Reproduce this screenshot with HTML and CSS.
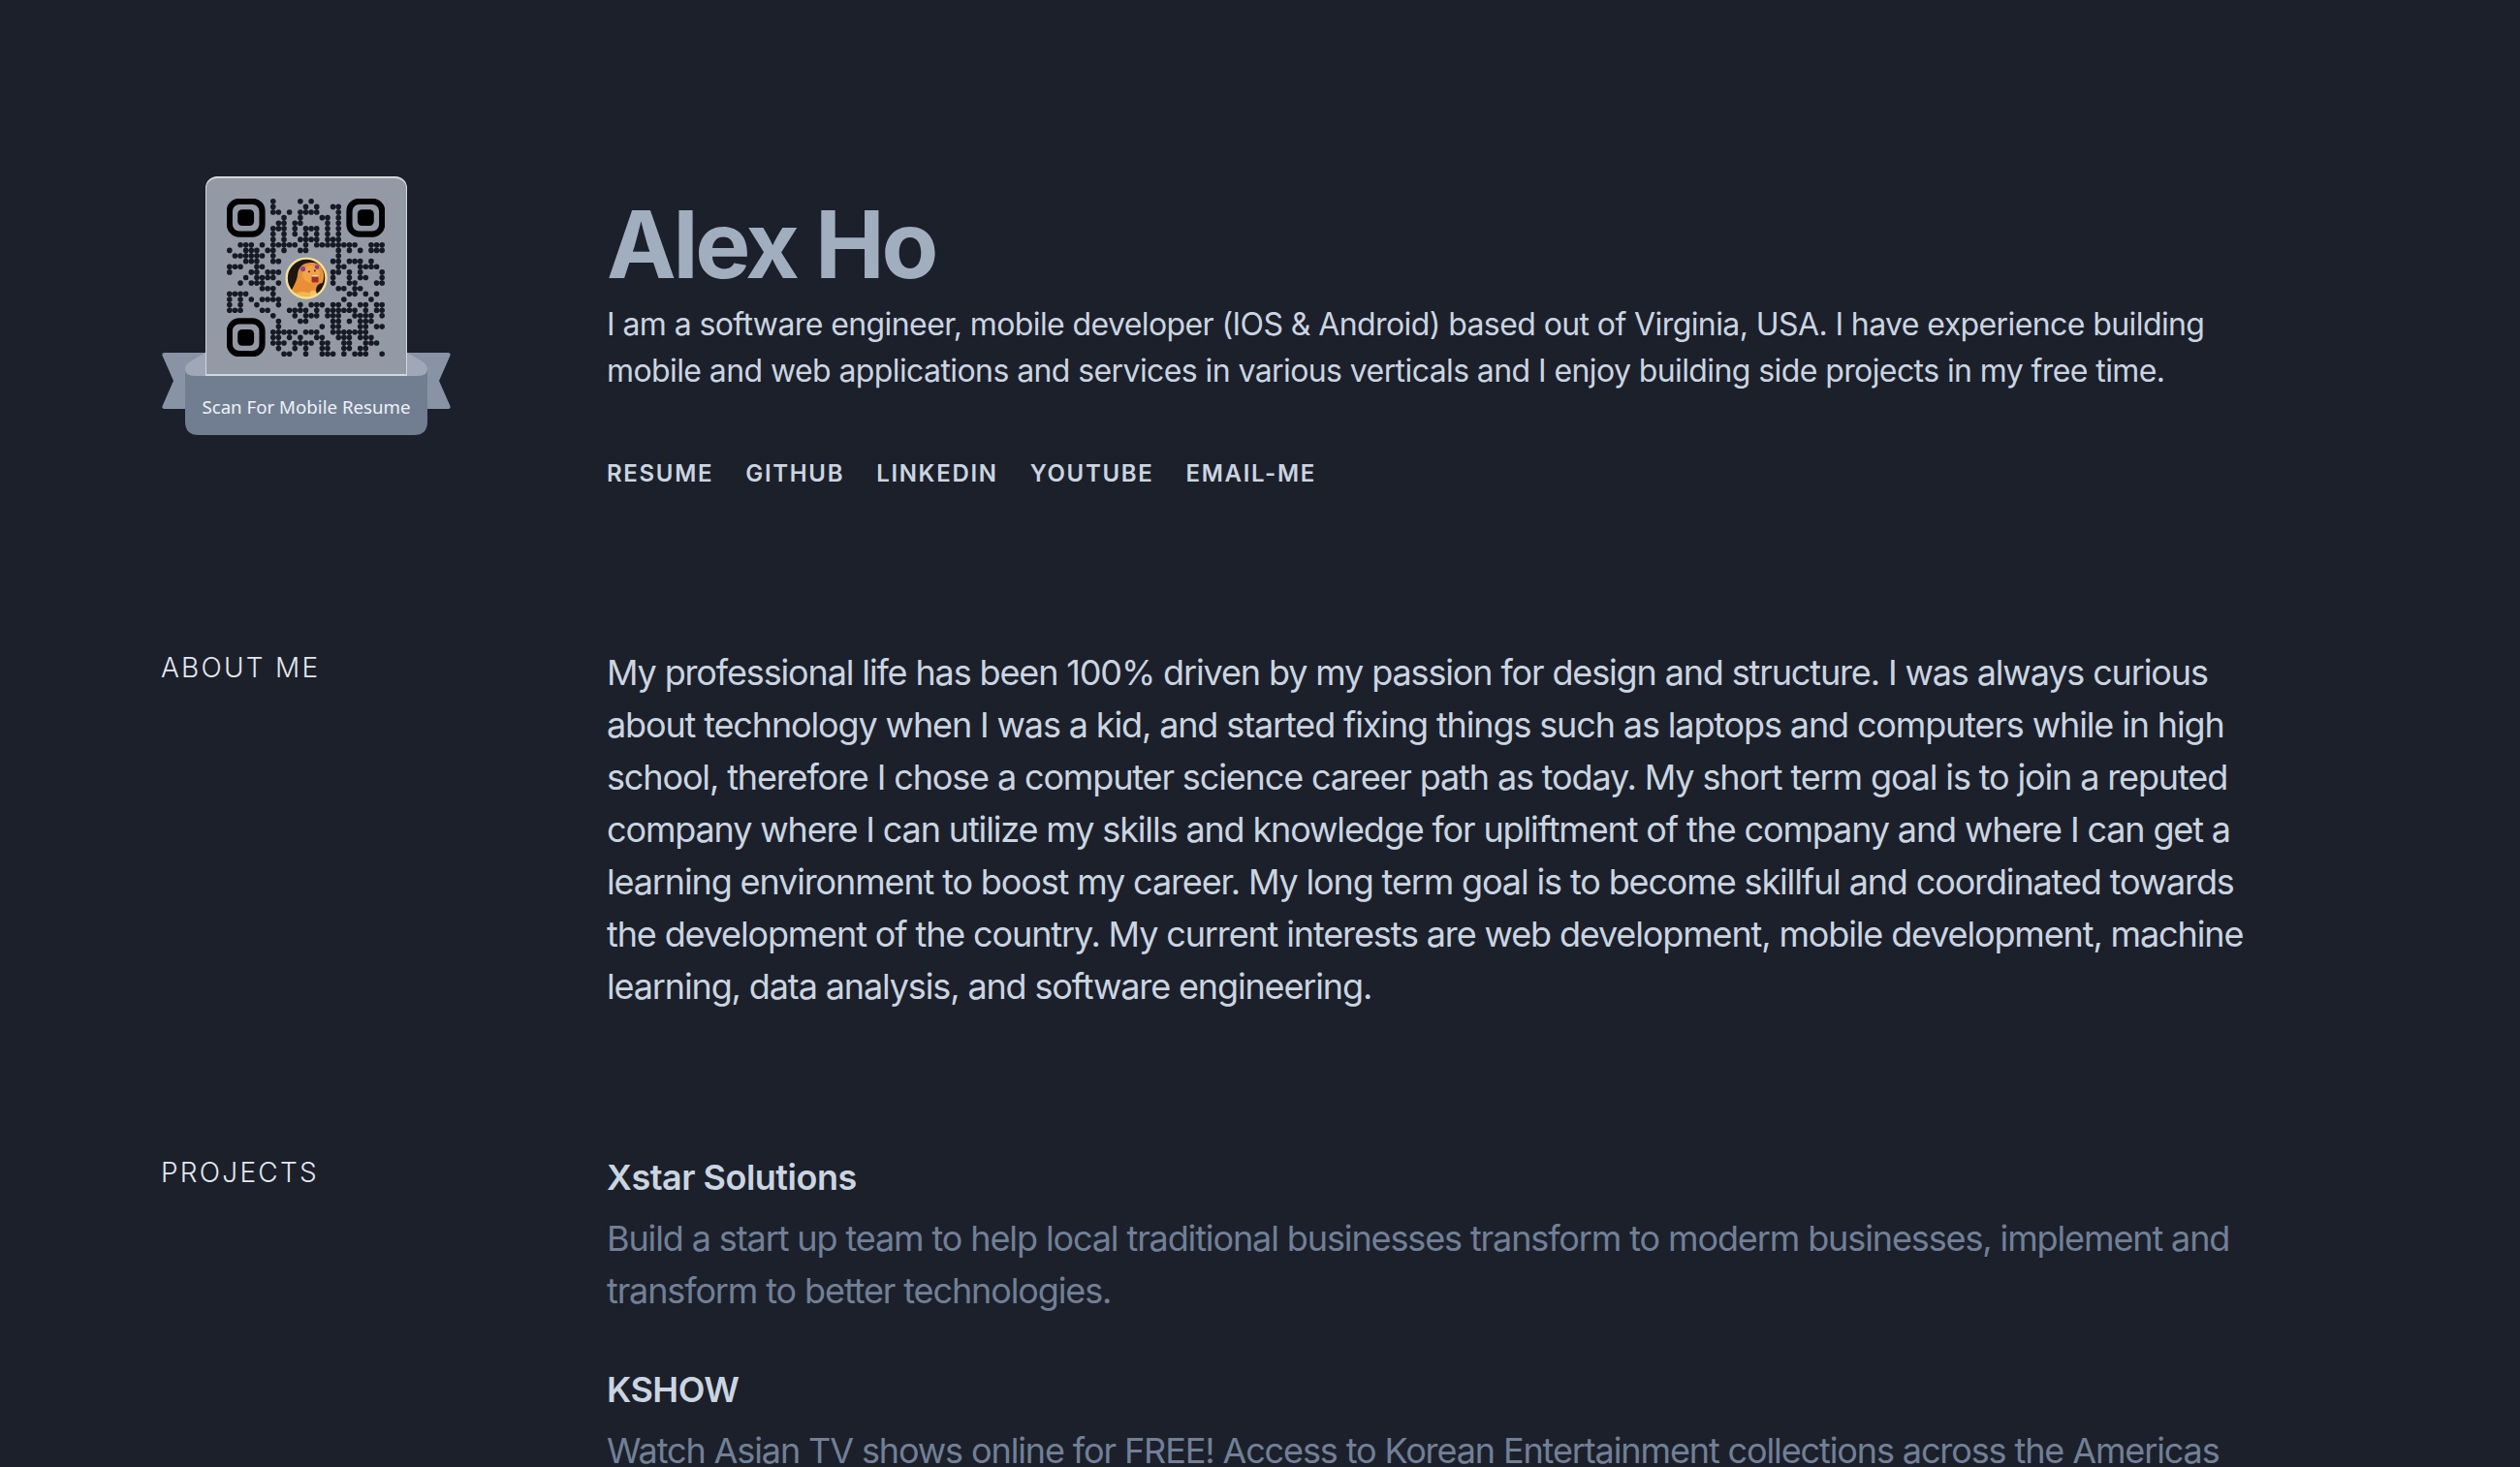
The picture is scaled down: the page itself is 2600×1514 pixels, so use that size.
FILE: index.html
```html
<!DOCTYPE html>
<html lang="en">
<head>
<meta charset="utf-8">
<title>Alex Ho</title>
<link rel="stylesheet" href="styles.css">
</head>
<body>
<main class="page">
  <header class="section header">
    <div class="badge">
      <svg class="ribbon" viewBox="0 0 300 267" width="300" height="267" aria-hidden="true">
        <path class="tail" d="M4 182H46V240H4Q0 240 2 236L13 211 2 186Q0 182 4 182Z"/>
        <path class="tail" d="M296 182H254V240H296Q300 240 298 236L287 211 298 186Q300 182 296 182Z"/>
        <path class="band" d="M25 196H275V253Q275 267 261 267H39Q25 267 25 253Z"/>
        <path class="fold" d="M25 199Q25 194 32 190L46 182H254L268 190Q275 194 275 199Q275 206 265 206H35Q25 206 25 199Z"/>
      </svg>
      <div class="qr-card">
        <svg class="qr" viewBox="0 0 29 29" width="163" height="163" role="img" aria-label="QR code">
          <g class="finder">
            <rect x=".5" y=".5" width="6" height="6" rx="1.8"/>
            <rect x="22.5" y=".5" width="6" height="6" rx="1.8"/>
            <rect x=".5" y="22.5" width="6" height="6" rx="1.8"/>
          </g>
          <g class="finder-eye">
            <rect x="2" y="2" width="3" height="3" rx=".8"/>
            <rect x="24" y="2" width="3" height="3" rx=".8"/>
            <rect x="2" y="24" width="3" height="3" rx=".8"/>
          </g>
          <path class="modules" transform="translate(.5 .5)" d="M8 0h.01M13 0h.01M15 0h.01
            M8 1h.01M14 1h.01M16 1h.01M19 1h1.01
            M8 2h1.01M11 2h.01M13 2h3.01M20 2h.01
            M10 3h.01M13 3h.01M17 3h1.01M20 3h.01
            M9 4h1.01M12 4h1.01M18 4h.01M20 4h.01
            M8 5h2.01M12 5h.01M14 5h2.01M18 5h.01M20 5h.01
            M8 6h.01M10 6h.01M12 6h.01M14 6h.01M16 6h.01M18 6h.01M20 6h.01
            M8 7h.01M10 7h.01M13 7h3.01M18 7h2.01
            M2 8h2.01M6 8h.01M8 8h4.01M14 8h.01M16 8h7.01M26 8h2.01
            M0 9h.01M3 9h2.01M7 9h1.01M10 9h.01M13 9h1.01M20 9h.01M22 9h.01M24 9h.01M26 9h2.01
            M1 10h5.01M8 10h.01M20 10h.01
            M3 11h2.01M8 11h1.01M19 11h1.01M22 11h2.01M26 11h.01
            M0 12h2.01M5 12h1.01M20 12h1.01M24 12h3.01
            M0 13h.01M4 13h1.01M7 13h2.01M19 13h1.01M22 13h.01M24 13h.01M28 13h.01
            M3 14h.01M5 14h3.01M19 14h.01M22 14h.01M24 14h1.01M28 14h.01
            M2 15h.01M4 15h2.01M9 15h.01M19 15h.01M22 15h1.01M27 15h1.01
            M6 16h2.01M20 16h1.01M23 16h1.01
            M0 17h3.01M8 17h.01M22 17h1.01M25 17h.01M27 17h.01
            M0 18h.01M2 18h.01M4 18h.01M6 18h3.01M21 18h.01M26 18h.01
            M0 19h.01M2 19h.01M5 19h.01M9 19h.01M13 19h.01M15 19h2.01M19 19h1.01M22 19h.01M24 19h1.01M27 19h1.01
            M0 20h2.01M6 20h1.01M11 20h3.01M16 20h.01M18 20h5.01M25 20h.01M27 20h1.01
            M8 21h.01M12 21h.01M14 21h2.01M18 21h2.01M23 21h3.01M28 21h.01
            M9 22h.01M13 22h1.01M19 22h1.01M22 22h.01M24 22h2.01
            M9 23h.01M17 23h.01M19 23h1.01M24 23h1.01M27 23h1.01
            M8 24h4.01M14 24h2.01M19 24h6.01
            M8 25h1.01M11 25h.01M13 25h.01M16 25h1.01M20 25h2.01M24 25h2.01
            M8 26h2.01M12 26h3.01M17 26h1.01M21 26h1.01M25 26h2.01
            M9 27h.01M12 27h.01M14 27h.01M17 27h1.01M21 27h1.01M24 27h1.01
            M10 28h1.01M14 28h.01M17 28h2.01M21 28h.01M23 28h2.01M28 28h.01"/>
          <svg x="10.7" y="10.7" width="7.8" height="7.8" viewBox="0 0 44 44">
            <defs><clipPath id="lion-clip"><circle cx="22" cy="22" r="20.5"/></clipPath></defs>
            <circle cx="22" cy="22" r="20.5" fill="#1c1712"/>
            <g clip-path="url(#lion-clip)">
              <path fill="#e98f35" d="M4 44C6 32 12 28 13 18 14 8 22 5 29 6 37 7 41 14 40 22 39 30 34 33 32 44Z"/>
              <path fill="#f4b650" d="M2 44C8 37 16 35 24 37 30 38 34 40 36 44Z"/>
              <circle cx="27" cy="18" r="9" fill="#f0a445"/>
              <circle cx="39" cy="34" r="7" fill="#1c1712"/>
            </g>
            <circle cx="18.5" cy="12.5" r="2.6" fill="#8c3f9c"/>
            <circle cx="33" cy="10.5" r="2.4" fill="#8c3f9c"/>
            <rect x="27.5" y="20" width="7" height="6.5" rx="1" fill="#a52c24"/>
            <rect x="28" y="19" width="6" height="1.4" fill="#f6e7c8"/>
            <rect x="24" y="14.5" width="1.6" height="1.6" fill="#2a1a10"/>
            <rect x="30" y="13.5" width="1.6" height="1.6" fill="#2a1a10"/>
            <circle cx="29" cy="38" r="3.2" fill="#f7c766"/>
            <circle cx="22" cy="22" r="20.5" fill="none" stroke="#f6e28e" stroke-width="2.4"/>
          </svg>
        </svg>
      </div>
      <p class="badge-label">Scan For Mobile Resume</p>
    </div>
    <div class="intro">
      <h1 class="name">Alex Ho</h1>
      <p class="summary">I am a software engineer, mobile developer (IOS &amp; Android) based out of Virginia, USA. I have experience building mobile and web applications and services in various verticals and I enjoy building side projects in my free time.</p>
      <nav class="links">
        <a class="link" href="#">Resume</a>
        <a class="link" href="#">GitHub</a>
        <a class="link" href="#">LinkedIn</a>
        <a class="link" href="#">YouTube</a>
        <a class="link" href="#">Email-Me</a>
      </nav>
    </div>
  </header>

  <section class="section">
    <h2 class="label">About Me</h2>
    <p class="about">My professional life has been 100% driven by my passion for design and structure. I was always curious about technology when I was a kid, and started fixing things such as laptops and computers while in high school, therefore I chose a computer science career path as today. My short term goal is to join a reputed company where I can utilize my skills and knowledge for upliftment of the company and where I can get a learning environment to boost my career. My long term goal is to become skillful and coordinated towards the development of the country. My current interests are web development, mobile development, machine learning, data analysis, and software engineering.</p>
  </section>

  <section class="section">
    <h2 class="label">Projects</h2>
    <div class="projects">
      <article class="project">
        <h3 class="project-title">Xstar Solutions</h3>
        <p class="project-desc">Build a start up team to help local traditional businesses transform to moderm businesses, implement and transform to better technologies.</p>
      </article>
      <article class="project">
        <h3 class="project-title">KSHOW</h3>
        <p class="project-desc">Watch Asian TV shows online for FREE! Access to Korean Entertainment collections across the Americas</p>
      </article>
    </div>
  </section>
</main>
</body>
</html>
```

FILE: styles.css
```css
* { box-sizing: border-box; }

html, body {
  height: 100%;
  margin: 0;
  overflow: hidden;
  background: #1c202b;
}

body {
  font-family: Inter, "Noto Sans", sans-serif;
  color: #cbd5e0;
}

h1, h2, h3, p { margin: 0; }

.page {
  display: flex;
  flex-direction: column;
  gap: 143px;
  padding: 182px 260px 0 166px;
}

.section {
  display: grid;
  grid-template-columns: 460px 1fr;
}

.header { margin-bottom: 17px; }

/* badge */
.badge {
  position: relative;
  width: 300px;
  height: 267px;
}

.ribbon {
  position: absolute;
  inset: 0;
  display: block;
}

.tail { fill: #8993a6; }
.band { fill: #717e92; }
.fold { fill: #a0a8b8; }

.qr-card {
  position: absolute;
  left: 46px;
  top: 0;
  width: 208px;
  height: 206px;
  padding: 21px;
  background: #949aa5;
  border: solid #d3d6db;
  border-width: 2px 1px 2px 1px;
  border-radius: 12px 12px 0 0;
}

.qr { display: block; }
.finder rect { fill: none; stroke: #000; stroke-width: 1.1; }
.finder-eye rect { fill: #000; }
.modules {
  fill: none;
  stroke: #161a25;
  stroke-width: 1;
  stroke-linecap: round;
  stroke-dasharray: 0 1;
}

.badge-label {
  position: absolute;
  left: 25px;
  right: 25px;
  top: 225px;
  font-family: "Noto Sans", sans-serif;
  font-size: 18.7px;
  line-height: 26px;
  text-align: center;
  color: #edf2f7;
}

/* intro */
.intro { padding-top: 22px; }

.name {
  font-size: 96px;
  line-height: 96px;
  font-weight: 700;
  letter-spacing: -0.034em;
  color: #a0aec0;
}

.summary {
  margin-top: 11px;
  font-size: 32px;
  line-height: 48px;
  font-weight: 400;
  letter-spacing: -0.0185em;
}

.links {
  display: flex;
  gap: 33px;
  margin-top: 64px;
}

.link {
  font-size: 24px;
  line-height: 36px;
  font-weight: 600;
  letter-spacing: .07em;
  text-transform: uppercase;
  text-decoration: none;
  color: #cbd5e0;
}

/* sections */
.label {
  padding-top: 1px;
  font-size: 28px;
  line-height: 42px;
  font-weight: 300;
  letter-spacing: .08em;
  text-transform: uppercase;
  color: #e2e8f0;
}

.about {
  font-size: 36px;
  line-height: 54px;
  font-weight: 380;
  letter-spacing: -0.0316em;
  color: #cbd5e0;
}

.projects {
  display: flex;
  flex-direction: column;
  gap: 48px;
}

.project-title {
  font-size: 36px;
  line-height: 54px;
  font-weight: 600;
  letter-spacing: -0.014em;
  color: #cbd5e0;
}

.project-desc {
  margin-top: 9px;
  font-size: 36px;
  line-height: 54px;
  font-weight: 380;
  letter-spacing: -0.031em;
  color: #718096;
}
```
